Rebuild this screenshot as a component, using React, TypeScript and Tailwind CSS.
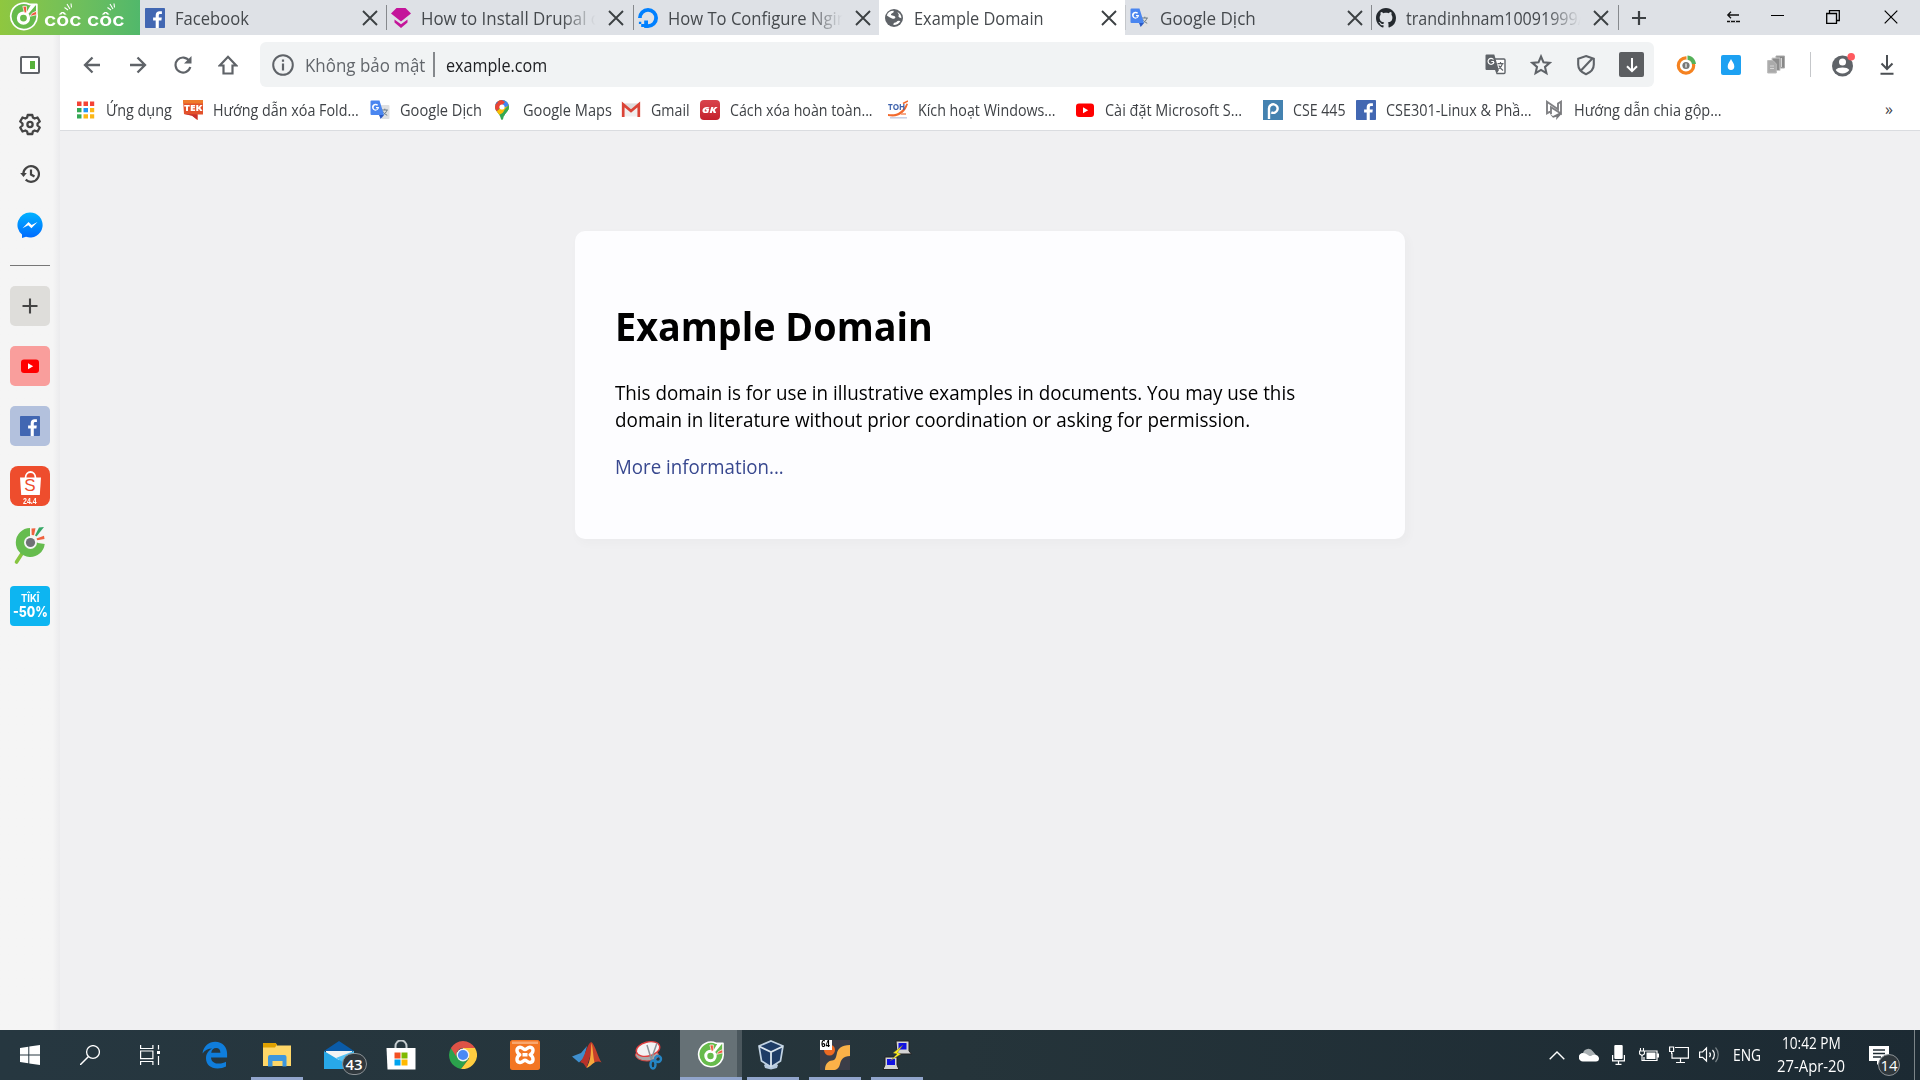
import React, { useLayoutEffect, useRef, useState } from "react";

type FitProps = { w: number; className?: string; children: React.ReactNode };

/* A line of text condensed or stretched to a given width. */
function Fit({ w, className = "", children }: FitProps) {
  const ref = useRef<HTMLSpanElement>(null);
  const [scale, setScale] = useState(1);
  useLayoutEffect(() => {
    if (ref.current) setScale(w / ref.current.offsetWidth);
  }, [w]);
  return (
    <span className={`block shrink-0 whitespace-nowrap ${className}`} style={{ width: w }}>
      <span ref={ref} className="inline-block origin-left" style={{ transform: `scaleX(${scale})` }}>
        {children}
      </span>
    </span>
  );
}

type IconProps = { className?: string };

const FacebookIcon = ({ className = "size-5" }: IconProps) => (
  <svg viewBox="0 0 20 20" className={className}>
    <rect width="20" height="20" rx="0.8" fill="#4267b2" />
    <path d="M13.8 20v-7.6h2.6l.4-3h-3V7.5c0-.9.3-1.5 1.5-1.5h1.6V3.3c-.3 0-1.200-.1-2.300-.1-2.300 0-3.900 1.400-3.900 4v2.200H8.100v3h2.600V20z" fill="#fff" />
  </svg>
);

const DrupalGuideIcon = () => (
  <svg viewBox="0 0 20 20" className="size-5">
    <path d="M5.500 0h9L20 5.500 10 13.500 0 5.500z" fill="#c4159a" />
    <path d="M3.500 11.500 10 16.300l6.500-4.800v3L10 20l-6.500-5.500z" fill="#c4159a" />
  </svg>
);

const DigitalOceanIcon = () => (
  <svg viewBox="0 0 20 20" className="size-5">
    <path d="M10 18.100A8.100 8.100 0 1 0 1.900 10" fill="none" stroke="#0080ff" strokeWidth="3.800" />
    <path d="M6.200 16.100H10V20H6.200zM3.200 16.100h3v3h-3zM.9 13.700h2.400v2.400H.9zM6.200 12.400H10v3.700H6.200z" fill="#0080ff" />
  </svg>
);

const GlobeIcon = () => (
  <svg viewBox="0 0 20 20" className="size-5">
    <circle cx="10" cy="10" r="9" fill="#5f6368" />
    <path d="M9.500 2.800c1 1.400-.8 2.100-1.800 2.600-.9.500-1 1.300-.2 1.900 1 .7 2.600.2 3.500 1.300.8 1 .2 2-.9 2.100-1.500.1-3.400-.6-4.600-1.500L2.800 7.500C3.600 4.800 6 2.800 9.500 2.800zM13.500 4c2.500 1.300 4 3.500 3.900 6.200l-2-.7c-.9-.4-1.200-1.400-.7-2.200.6-1.200-1-1.800-1.200-3.300zM9.500 16.900c-.3-1.200.5-2 1.700-2.300 1.600-.4 1.900-1.700 3.200-1.900l2 .2c-1.300 2.500-3.800 4.100-6.900 4z" fill="#fff" />
  </svg>
);

const TranslateIcon = () => (
  <svg viewBox="0 0 20 20" className="size-5">
    <path d="M8 5h10.500a1 1 0 0 1 1 1v12a1 1 0 0 1-1 1H12z" fill="#dfe0e2" />
    <path d="M11.800 10h6M14.800 8.700V10M17 10c-.7 2.500-2.500 4-4 5M13 11.500c.8 1.600 2.300 2.800 4.200 3.800" stroke="#6b7b85" strokeWidth="1" fill="none" />
    <path d="M1.500.500h8L14 15H1.500a1 1 0 0 1-1-1V1.500a1 1 0 0 1 1-1z" fill="#4a86f0" />
    <path d="M9 15h5l-3.300 4z" fill="#2b59c3" />
    <path d="M9 7H6v1.300h1.600C7.300 9.200 6.600 9.600 5.800 9.600a2.200 2.200 0 1 1 1.400-3.900l.9-.9A3.500 3.500 0 1 0 9 7z" fill="#fff" />
  </svg>
);

const GithubIcon = () => (
  <svg viewBox="0 0 16 16" className="size-5">
    <path fill="#24292e" d="M8 0C3.580 0 0 3.580 0 8c0 3.540 2.290 6.530 5.470 7.590.4.070.550-.170.550-.380 0-.190-.010-.820-.010-1.490-2.010.370-2.530-.490-2.690-.940-.090-.230-.480-.940-.820-1.130-.280-.150-.680-.520-.010-.530.630-.010 1.080.580 1.230.820.720 1.210 1.870.870 2.330.660.070-.520.280-.870.510-1.070-1.780-.200-3.640-.890-3.640-3.950 0-.870.310-1.590.820-2.150-.080-.200-.360-1.020.080-2.120 0 0 .670-.210 2.200.820.640-.180 1.320-.270 2-.270s1.360.090 2 .270c1.530-1.040 2.200-.820 2.200-.820.440 1.100.160 1.920.080 2.120.510.560.820 1.270.820 2.150 0 3.070-1.870 3.750-3.650 3.950.290.250.540.730.540 1.480 0 1.070-.010 1.930-.010 2.200 0 .210.150.460.550.380A8.010 8.010 0 0 0 16 8c0-4.420-3.580-8-8-8z" />
  </svg>
);

const CloseIcon = () => (
  <svg viewBox="0 0 16 16" className="size-4 shrink-0">
    <path d="M1 1l14 14M15 1L1 15" stroke="#3c4043" strokeWidth="1.900" />
  </svg>
);

const AppsIcon = () => (
  <svg viewBox="0 0 20 20" className="size-5">
    <path d="M1 1.500h4.500V6H1zM7.500 1.500H12V6H7.500zM14 1.500h4.200V6H14z" fill="#f44336" />
    <path d="M1 8h4.500v4.300H1z" fill="#34a853" />
    <path d="M7.500 8H12v4.300H7.500z" fill="#2196f3" />
    <path d="M14 8h4.200v4.300H14zM7.500 14.300H12v4.200H7.500zM14 14.300h4.200v4.200H14z" fill="#fbb616" />
    <path d="M1 14.300h4.500v4.200H1z" fill="#34a853" />
  </svg>
);

const TekIcon = () => (
  <div className="relative h-5 w-5">
    <svg viewBox="0 0 20 20" className="size-5">
      <path d="M0 0h20v14.500h-5.500V20L9 15.500 1 14z" fill="#e2512b" />
      <path d="M0 0h20v3.500H0z" fill="#ef7a2c" />
      <path d="M1 14l13.500.5V20L9 15.700z" fill="#c9302c" />
    </svg>
    <Fit w={18} className="absolute left-px top-[2px] text-[9px] leading-[11px] font-extrabold text-white">TEK</Fit>
  </div>
);

const MapsIcon = () => (
  <svg viewBox="0 0 20 20" className="size-5">
    <clipPath id="mapPin">
      <path d="M9 0a7 7 0 0 1 7 7c0 4.500-5 6.500-5.800 11.500-.2 1.700-2.200 1.700-2.400 0C7 13.500 2 11.500 2 7a7 7 0 0 1 7-7z" />
    </clipPath>
    <g clipPath="url(#mapPin)">
      <path d="M0 0h20v20H0z" fill="#34a853" />
      <path d="M1 13L17 1v8L6 15z" fill="#fbbc04" />
      <path d="M8 0h10v5L10 8z" fill="#4285f4" />
      <path d="M0 0h9l3 2-8 9H0z" fill="#ea4335" />
      <path d="M0 7l5-5-5-2z" fill="#1a73e8" />
      <path d="M12 9l5-5v12H8z" fill="#34a853" />
    </g>
    <circle cx="9" cy="7" r="2.600" fill="#fff" />
  </svg>
);

const GmailIcon = () => (
  <svg viewBox="0 0 20 20" className="size-5">
    <path d="M2 3.500h16v13H2z" fill="#f0eeee" />
    <path d="M2 3.500h16L10 10z" fill="#dedbdb" />
    <path d="M2.200 17V4.500L10 11l7.800-6.500V17" stroke="#db4437" strokeWidth="2.700" fill="none" />
  </svg>
);

const GkIcon = () => (
  <div className="flex size-5 items-center justify-center rounded-[4px] bg-linear-to-b from-[#d9434c] to-[#c41f2b]">
    <Fit w={15} className="text-[8px] leading-[10px] font-extrabold italic text-white">GK</Fit>
  </div>
);

const TohIcon = () => (
  <div className="relative size-5">
    <svg viewBox="0 0 20 20" className="size-5">
      <path d="M0 14c8 1.500 14-1.500 18.500-10.500L20 4c-3 9-9 14-20 12z" fill="#f26a2e" />
      <path d="M2 17.800h17" stroke="#c9cfe4" strokeWidth="1.500" />
      <path d="M13 14h5" stroke="#f5936a" strokeWidth="1.600" />
      <path d="M15 3.500L20 1" stroke="#f26a2e" strokeWidth="1.500" />
    </svg>
    <Fit w={17} className="absolute left-0 top-[2px] text-[9px] leading-[10px] font-bold text-[#3f63ad]">TOH</Fit>
  </div>
);

const YoutubeIcon = () => (
  <svg viewBox="0 0 20 20" className="size-5">
    <rect x="1" y="3.500" width="18" height="13.500" rx="3" fill="#f00" />
    <path d="M8 7.200v6l5.200-3z" fill="#fff" />
  </svg>
);

const PIcon = () => (
  <div className="flex size-5 items-center justify-center bg-[#4482b0]">
    <svg viewBox="0 0 20 20" className="size-5">
      <path d="M6 19V8.500a4.300 4.300 0 1 1 2.300 3.900" fill="none" stroke="#fff" strokeWidth="2.400" />
    </svg>
  </div>
);

const NIcon = () => (
  <svg viewBox="0 0 20 20" className="size-5">
    <path d="M7.500 10.800L3 13.300V1.800l11 7.500V3.500l3-1.800v11.800L7 7.300v7" fill="none" stroke="#808184" strokeWidth="1.900" />
    <path d="M6 14.300l3 1.700 8-4v2.500L12 20l.5-3.200-3.500 1z" fill="#77787b" />
  </svg>
);

/* Round badge with a "C" shaped eye and the chick's crest. */
const CocMark = ({ className = "size-7" }: IconProps) => (
  <svg viewBox="0 0 28 28" className={className}>
    <path d="M19 2.200A12.300 12.300 0 1 0 26 11V2.300z" fill="#67bb4c" stroke="#fff" strokeWidth="1.600" strokeLinejoin="round" />
    <circle cx="13.500" cy="15" r="4.700" fill="none" stroke="#fff" strokeWidth="3" />
    <path d="M12.900 4l3.400 0 .1 6-2 .2zM21.500 10.500l4-1.900.3 3.200-6.300 1.600z" fill="#f2563c" stroke="#fff" strokeWidth=".7" />
    <path d="M20.500 2.500l5-.2-7.500 9-1.800-1.500z" fill="#fff" />
  </svg>
);

const tabs = [
  { icon: <FacebookIcon />, title: "Facebook", w: 74 },
  { icon: <DrupalGuideIcon />, title: "How to Install Drupal on", w: 190, fade: true },
  { icon: <DigitalOceanIcon />, title: "How To Configure Nginx", w: 188, fade: true },
  { icon: <GlobeIcon />, title: "Example Domain", w: 130, active: true },
  { icon: <TranslateIcon />, title: "Google Dịch", w: 95.500 },
  { icon: <GithubIcon />, title: "trandinhnam10091999/", w: 178, fade: true },
];

function TabStrip() {
  return (
    <div className="flex h-[35px] bg-[#dee1e6]">
      <div className="flex w-[140px] shrink-0 items-center bg-linear-to-r from-[#8fc73f] to-[#51b86b] pl-[9px]">
        <CocMark className="mb-px h-[30px] w-[30px]" />
        <div className="relative ml-[5px] mt-[5px] flex">
          <Fit w={80} className="font-['Inter'] text-[18px] leading-[24px] font-semibold text-white">côc côc</Fit>
          <svg viewBox="0 0 82 10" className="absolute left-0 -top-[5px] h-[10px] w-[82px]">
            <path d="M23 1l3 5M20.500 4.500l3.500 2.500M27 .5l.5 4M66 1l3 5M63.500 4.500l3.500 2.500M70 .5l.5 4" stroke="#fff" strokeWidth="1.100" />
          </svg>
        </div>
      </div>
      {tabs.map((t, i) => (
        <div key={t.title} className={`flex w-[246.3px] shrink-0 items-center ${t.active ? "bg-white" : ""}`}>
          <div className={`-mr-px h-[25px] w-px ${i === 0 || t.active ? "" : i === 4 ? "bg-[#c4c7cb]" : "bg-[#86898d]"}`} />
          <div className="ml-[5px] shrink-0">{t.icon}</div>
          <div className={`ml-[10px] w-[180px] overflow-hidden ${t.fade ? "[mask-image:linear-gradient(to_right,black_78%,transparent_97%)]" : ""}`}>
            <Fit w={t.w} className="text-[17.5px] leading-[26px] text-[#45494d]">{t.title}</Fit>
          </div>
          <div className="ml-[7px]"><CloseIcon /></div>
        </div>
      ))}
      <div className="flex items-center">
        <div className="h-[25px] w-px bg-[#86898d]" />
        <svg viewBox="0 0 16 16" className="ml-[12px] size-4"><path d="M8 1v14M1 8h14" stroke="#3c4043" strokeWidth="2.200" /></svg>
      </div>
      <div className="ml-auto flex items-center pb-[2px] text-black">
        <svg viewBox="0 0 14 12" className="mr-[31px] h-3 w-[14px]"><path d="M13 4H2M5 .8L1.800 4 5 7.200M1 10.500h13" fill="none" stroke="#111" strokeWidth="1.300" /><path d="M4.500 9.500v2M9.500 9.500v2" stroke="#dee1e6" /></svg>
        <div className="mr-[42px] mb-[2px] h-px w-[13px] bg-black" />
        <svg viewBox="0 0 14 14" className="mr-[44px] size-[14px]"><path d="M.7 3.500h9.800v9.800H.7zM3.500 3.500V.7h9.800v9.800h-2.800" fill="none" stroke="#000" strokeWidth="1.300" /></svg>
        <svg viewBox="0 0 14 14" className="mr-[22px] size-[14px]"><path d="M.7.7l12.600 12.600M13.300.7L.7 13.300" stroke="#000" strokeWidth="1.200" /></svg>
      </div>
    </div>
  );
}

function Toolbar() {
  return (
    <div className="flex h-[59px] items-center">
      <div className="flex w-[200px] shrink-0 items-center pl-[23px]">
        <svg viewBox="0 0 18 18" className="size-[18px]"><path d="M17 9H2.500M9.500 1.500L2 9l7.500 7.500" fill="none" stroke="#5f6368" strokeWidth="2.300" /></svg>
        <svg viewBox="0 0 18 18" className="ml-[28px] size-[18px]"><path d="M1 9h14.500M8.500 1.500L16 9l-7.500 7.500" fill="none" stroke="#5f6368" strokeWidth="2.300" /></svg>
        <svg viewBox="0 0 18 18" className="ml-[27px] size-[18px]"><path d="M15.400 5A7.500 7.500 0 1 0 16.300 11" fill="none" stroke="#5f6368" strokeWidth="2.200" /><path d="M17.500 0v7.500H10z" fill="#5f6368" /></svg>
        <svg viewBox="0 0 20 20" className="ml-[26px] size-5"><path d="M5.500 18.500V10.500H1.800L10 1.800l8.200 8.700h-3.700v8z" fill="none" stroke="#5f6368" strokeWidth="2.200" /></svg>
      </div>
      <div className="flex h-[45px] w-[1394px] shrink-0 items-center rounded-[6px] bg-[#f1f3f4] pl-[12px] pr-[10px]">
        <svg viewBox="0 0 22 22" className="size-[22px]"><circle cx="11" cy="11" r="9.800" fill="none" stroke="#5f6368" strokeWidth="2" /><path d="M11 9.500v7M11 5.500v2.200" stroke="#5f6368" strokeWidth="2.200" /></svg>
        <Fit w={120} className="ml-[11px] text-[17.5px] leading-[26px] text-[#62666b]">Không bảo mật</Fit>
        <div className="ml-[8px] h-[25px] w-[1.500px] bg-[#85888c]" />
        <Fit w={101.500} className="ml-[11px] text-[17.5px] leading-[26px] text-[#202124]">example.com</Fit>
        <div className="ml-auto flex items-center">
          <svg viewBox="0 0 21 21" className="size-[21px]">
            <path d="M8 5h11a1 1 0 0 1 1 1v12.500a1 1 0 0 1-1 1h-7.500" fill="#fff" stroke="#5f6368" strokeWidth="1.400" />
            <path d="M1.500.500h7.800l4.500 15.500H1.500a1 1 0 0 1-1-1V1.500a1 1 0 0 1 1-1zM10 16h4l-2.500 4z" fill="#5f6368" />
            <path d="M9 7.500H6.300M8.500 5.500a3 3 0 1 0 .5 2.500" fill="none" stroke="#fff" strokeWidth="1.200" />
            <path d="M12.500 9.700h6M15.500 8v1.700M17.500 9.700c-.7 2.800-2 4-4 5.300M13.800 11.500c1 2 2.300 3.500 4.300 5" fill="none" stroke="#5f6368" strokeWidth="1.200" />
          </svg>
          <svg viewBox="0 0 22 22" className="ml-[24px] size-[22px]"><path d="M11 2.500l2.500 5.800 6.200.6-4.700 4.100 1.400 6.100-5.400-3.200-5.400 3.200L7 13 2.300 8.900l6.200-.6z" fill="none" stroke="#5f6368" strokeWidth="2.100" /></svg>
          <svg viewBox="0 0 20 22" className="ml-[24px] h-[22px] w-5"><path d="M10 2l7.800 2.800v5.700c0 4.600-3 7.800-7.800 9.700-4.800-1.900-7.800-5.100-7.800-9.700V4.800z" fill="none" stroke="#5f6368" strokeWidth="2.100" /><path d="M4.500 17L16.300 4.500" stroke="#5f6368" strokeWidth="2.100" /></svg>
          <div className="ml-[23px] flex size-[25px] items-center justify-center rounded-[2px] bg-[#5c5e61]">
            <svg viewBox="0 0 16 16" className="size-4"><path d="M8 1v13M3 9.200l5 5 5-5" fill="none" stroke="#fff" strokeWidth="2" /></svg>
          </div>
        </div>
      </div>
      <div className="flex items-center pl-[22px]">
        <svg viewBox="0 0 20 20" className="size-5"><circle cx="10" cy="10.500" r="7.700" fill="none" stroke="#f58220" strokeWidth="3.200" /><path d="M10.500 9V0c5.500 0 9.200 3.500 9.500 9h-4.500c-.3-2.500-2-4-5-4.300z" fill="#fff" /><path d="M11.500.5c4.500.2 8 3.700 8.500 8.500h-4c-.5-2.400-2.100-4-4.500-4.300z" fill="#55b159" /><circle cx="10" cy="10.500" r="3.600" fill="#777" /><path d="M10 8.500v4" stroke="#eee" strokeWidth="1.300" /></svg>
        <div className="ml-[25px] flex size-5 items-center justify-center rounded-[2px] bg-[#1da1f2]">
          <svg viewBox="0 0 10 12" className="h-3 w-2.5"><path d="M5 0c1 2.500 3.300 4.500 3.300 7.300a3.300 3.800 0 0 1-6.600 0C1.700 4.500 4 2.500 5 0z" fill="#fff" /></svg>
        </div>
        <svg viewBox="0 0 20 20" className="ml-[26px] size-5"><path d="M9 1h8.500v12H9z" fill="#888" stroke="#aaa" /><path d="M5 3h8v12.500H5z" fill="#8c8c8c" stroke="#ccc" /><path d="M.7 5.500H6L9.300 9v9H.7z" fill="#aaa" stroke="#bbb" /><path d="M3 11h4M3 13.500h4M14.500 3v9" stroke="#d5d5d5" /></svg>
        <div className="ml-[23px] h-[25px] w-px bg-[#c5c7ca]" />
        <svg viewBox="0 0 24 24" className="ml-[20px] size-6"><circle cx="11.500" cy="13" r="10.500" fill="#5f6368" /><circle cx="11.500" cy="9" r="3.500" fill="#fff" /><path d="M4.700 17c1.500-3.300 12.100-3.300 13.600 0-3 4.500-10.600 4.500-13.600 0z" fill="#fff" /><circle cx="20.200" cy="3.800" r="3.800" fill="#ff5a5f" /></svg>
        <svg viewBox="0 0 14 20" className="ml-[25px] h-5 w-[14px]"><path d="M7 0v13.500M1.500 8.500L7 14l5.500-5.500M.5 18.700h13" fill="none" stroke="#4b4f53" strokeWidth="2" /></svg>
      </div>
    </div>
  );
}

const bookmarks = [
  { icon: <AppsIcon />, label: "Ứng dụng", w: 66, cell: "w-[107px]" },
  { icon: <TekIcon />, label: "Hướng dẫn xóa Fold...", w: 146, cell: "w-[187px]" },
  { icon: <TranslateIcon />, label: "Google Dịch", w: 82, cell: "w-[123px]" },
  { icon: <MapsIcon />, label: "Google Maps", w: 88.500, cell: "w-[128px]" },
  { icon: <GmailIcon />, label: "Gmail", w: 38.500, cell: "w-[79px]" },
  { icon: <GkIcon />, label: "Cách xóa hoàn toàn...", w: 143, cell: "w-[188px]" },
  { icon: <TohIcon />, label: "Kích hoạt Windows...", w: 138, cell: "w-[187px]" },
  { icon: <YoutubeIcon />, label: "Cài đặt Microsoft S...", w: 137, cell: "w-[188px]" },
  { icon: <PIcon />, label: "CSE 445", w: 53, cell: "w-[93px]" },
  { icon: <FacebookIcon />, label: "CSE301-Linux & Phầ...", w: 146, cell: "w-[188px]" },
  { icon: <NIcon />, label: "Hướng dẫn chia gộp...", w: 148, cell: "w-[190px]" },
];

function BookmarkBar() {
  return (
    <div className="flex h-[37px] items-center border-b border-[#dadce0] pb-[4px] pl-[15.5px]">
      {bookmarks.map((b) => (
        <div key={b.label} className={`flex shrink-0 items-center gap-[10px] ${b.cell}`}>
          <div className="shrink-0">{b.icon}</div>
          <Fit w={b.w} className="mb-px text-[15.5px] leading-[22px] text-[#3f4246]">{b.label}</Fit>
        </div>
      ))}
      <span className="ml-auto mr-[27px] mb-[3px] text-[16px] leading-[18px] text-[#3f4246]">»</span>
    </div>
  );
}

function Sidebar() {
  return (
    <aside className="flex w-[60px] shrink-0 flex-col items-center bg-linear-to-r from-[#f5f5f5] from-88% to-[#ebebed]">
      <svg viewBox="0 0 20 18" className="mt-[21px] h-[18px] w-5"><rect x="1" y="1" width="18" height="16" rx="1" fill="#fff" stroke="#5f6368" strokeWidth="2" /><path d="M10 5h5v8h-5z" fill="#58b13c" /></svg>
      <svg viewBox="0 0 24 24" className="mt-[38px] size-6" fill="none" stroke="#444" strokeWidth="2.300" strokeLinejoin="round"><path d="M9.700 3h4.600l.6 2.500 1.700 1 2.900-1 2.300 4-2.300 2v2l2.300 2-2.300 4-2.900-1-1.700 1-.6 2.500H9.700l-.6-2.500-1.700-1-2.900 1-2.300-4 2.300-2v-2l-2.300-2 2.300-4 2.900 1 1.700-1z" /><circle cx="12" cy="12.500" r="2.600" /></svg>
      <svg viewBox="0 0 20 18" className="mt-[29px] h-[18px] w-5" fill="none" stroke="#444" strokeWidth="2.200"><path d="M3.300 9a7.800 7.800 0 1 1 2.400 5.600M11 4.500V9.500l3.500 2" /><path d="M.2 8h6.600L3.500 12z" fill="#444" stroke="none" /></svg>
      <svg viewBox="0 0 26 26" className="mt-[29px] size-[26px]"><defs><linearGradient id="msg" x1="0" y1="0" x2="0" y2="1"><stop stopColor="#00b2ff" /><stop offset="1" stopColor="#006aff" /></linearGradient></defs><path d="M13 .5A12.500 12.500 0 1 1 9 24.800L5 26v-3.500A12.400 12.400 0 0 1 13 .5z" fill="url(#msg)" /><path d="M5.500 16.200l6-6.300 3.200 3 5.800-3-6.100 6.400-3.100-3z" fill="#fff" /></svg>
      <div className="mt-[27px] h-px w-10 bg-[#777]" />
      <div className="mt-[20px] flex flex-col gap-5">
        <div className="flex size-10 items-center justify-center rounded-[5px] bg-[#deddda]">
          <svg viewBox="0 0 16 16" className="size-4"><path d="M8 .5v15M.5 8h15" stroke="#444" strokeWidth="2.100" /></svg>
        </div>
        <div className="flex size-10 items-center justify-center rounded-[5px] bg-[#f99e9c]"><YoutubeIcon /></div>
        <div className="flex size-10 items-center justify-center rounded-[5px] bg-[#b3c1dd]"><FacebookIcon /></div>
        <div className="relative size-10 rounded-[8px] bg-[#ee4d2d]">
          <svg viewBox="0 0 40 40" className="size-10"><path d="M10 11.500h21l-1.200 17.500H11.200z" fill="#fff" /><path d="M15.500 12c0-8 10-8 10 0" fill="none" stroke="#fff" strokeWidth="1.800" /></svg>
          <span className="absolute inset-x-0 top-[11px] text-center font-['Liberation_Sans'] text-[17px] leading-[17px] text-[#ee4d2d]">S</span>
          <Fit w={14} className="absolute left-[13px] top-[30px] font-['Liberation_Sans'] text-[9.5px] leading-[9px] font-bold text-white">24.4</Fit>
        </div>
        <svg viewBox="0 0 40 40" className="size-10">
          <path d="M6.500 36L13 26" stroke="#87c540" strokeWidth="3.600" strokeLinecap="round" />
          <path d="M20 2A14.500 14.500 0 1 0 34.700 18L28 17 20 12z" fill="#66bc4e" />
          <circle cx="20.500" cy="16.500" r="6.500" fill="#f5f5f5" /><circle cx="20.500" cy="16.500" r="4.600" fill="#707276" />
          <path d="M20.500 1h15v15h-8l-4-4.500h-3z" fill="#f5f5f5" />
          <path d="M21.500 2.500l4-.2-1.500 7-2.300-.3zM26.500 12.500l7.500-2.800.5 3.300-7.200 1.200z" fill="#f0623f" />
          <path d="M29 1.500l5-.5-7.500 9.500-1.500-1z" fill="#36a866" />
        </svg>
        <div className="flex size-10 flex-col items-center overflow-hidden rounded-[4px] bg-[#0db5f1] pt-[6px] text-white">
          <Fit w={18} className="h-[13px] font-['Inter'] text-[11px] leading-[13px] font-bold">TÎKÎ</Fit>
          <Fit w={35} className="h-[14px] font-['Inter'] text-[14px] leading-[14px] font-extrabold">-50%</Fit>
        </div>
      </div>
    </aside>
  );
}

const Badge = ({ children, className }: { children: React.ReactNode; className: string }) => (
  <span className={`absolute flex items-center justify-center rounded-full border border-[#8c9296] bg-[#30383d] text-white ${className}`}>{children}</span>
);

const taskApps: { name: string; open?: boolean; active?: boolean; icon: React.ReactNode }[] = [
  { name: "edge", icon: <svg viewBox="0 0 26 28" className="h-7 w-[26px]"><path d="M.5 12.500C1.500 5 7 .8 13.200.8c7.300 0 11.900 5 11.900 12v3.600H9c.2 4.700 4.200 6.200 8 6.200 2.700 0 5-.7 7-1.800v4.800c-2.300 1.300-5.200 2-8.500 2C8.500 27.600 4 23.300 4 17.300c0-4.500 2.500-8 6.200-9.800C6 7.500 3 9.300.5 12.500zM9.200 11.700h9.200c0-3-1.400-4.800-4.300-4.800-2.600 0-4.500 1.900-4.900 4.800z" fill="#0f7ddb" /></svg> },
  { name: "files", open: true, icon: <svg viewBox="0 0 28 24" className="h-6 w-7"><path d="M0 0h12.500l1.500 2.500H28V23H0z" fill="#ffd768" /><path d="M0 0h12.500l1.500 1.500-2 3H0z" fill="#e0a100" /><path d="M5 23.500V14a2 2 0 0 1 2-2h14.500a2 2 0 0 1 2 2v9.500h-4V18H9.500v5.500z" fill="#3e97dd" /></svg> },
  { name: "mail", icon: <div className="relative"><svg viewBox="0 0 30 28" className="h-7 w-[30px]"><path d="M0 10L15 0l15 10z" fill="#0a5ba8" /><path d="M2 10h26v9H2z" fill="#f3f3f3" /><path d="M0 10l15 9 15-9v18H0z" fill="#28a8e8" /><path d="M30 10v18L12 17z" fill="#52c2f5" /></svg><Badge className="left-[18px] top-[12px] h-[22px] w-[25px] text-[15px] leading-none font-semibold">43</Badge></div> },
  { name: "store", icon: <svg viewBox="0 0 30 30" className="size-[30px]"><path d="M9.500 8V6a5.500 5.500 0 0 1 11 0v2" fill="none" stroke="#c5cccf" strokeWidth="2" /><path d="M.5 8h29v21.500h-28z" fill="#fff" /><path d="M8.500 12.500h6v6h-6z" fill="#f25022" /><path d="M15.500 12.500h6v6h-6z" fill="#7fba00" /><path d="M8.500 19.500h6v6h-6z" fill="#00a4ef" /><path d="M15.500 19.500h6v6h-6z" fill="#ffb900" /></svg> },
  { name: "chrome", icon: <svg viewBox="0 0 28 28" className="size-7"><path d="M14 14L2 7A13.900 13.900 0 0 0 12 27.900L20 17z" fill="#2ba24c" /><path d="M14 14l6 3.500-8 10.400A14 14 0 0 0 26 7H14z" fill="#ffcd40" /><path d="M1.900 7a14 14 0 0 1 24.200 0H14a7 7 0 0 0-6.500 9z" fill="#de5246" /><circle cx="14" cy="14" r="6.400" fill="#f1f1f1" /><circle cx="14" cy="14" r="5.100" fill="#4a8af4" /></svg> },
  { name: "xampp", icon: <svg viewBox="0 0 30 30" className="size-[30px]"><rect width="30" height="30" rx="2.500" fill="#f37623" /><path d="M2 1.500h26v2.500H2z" fill="#f9a76e" /><path d="M9.800 14.800C6.500 13 5.500 7.500 10 7.300c2.500-.1 3.500 2.200 5 2.200s2.500-2.300 5-2.200c4.500.2 3.500 5.700.2 7.500 3.300 1.800 4.300 7.400-.2 7.700-2.500.1-3.500-2.200-5-2.200s-2.500 2.300-5 2.200c-4.500-.3-3.500-5.900-.2-7.700zM12.500 14.800h5" fill="none" stroke="#fff" strokeWidth="3.400" strokeLinejoin="round" /></svg> },
  { name: "matlab", icon: <svg viewBox="0 0 30 28" className="h-7 w-[30px]"><path d="M0 15.500l9-3.500 6-7-3 12-5 4.500z" fill="#3f8fce" /><path d="M8 21c5-4 7-19 11.500-20L20 9l-5.500 18-3-4.500z" fill="#b8322a" /><path d="M19.500 1C23 4 26 16 29.500 21.500c-5-3-9.500 1.500-15 5.500C20 20 17 8 19.500 1z" fill="#c8402a" /><path d="M19.500 2c-1 9 .5 15-5 25 3-1 5.500-4 8-5.500C21 15 21 7 19.500 2z" fill="#f7a83c" /></svg> },
  { name: "snip", icon: <svg viewBox="0 0 30 30" className="size-[30px]"><ellipse cx="13" cy="15" rx="11.500" ry="6" fill="#a8a8a8" stroke="#d8453f" /><ellipse cx="14" cy="9" rx="12" ry="7" transform="rotate(-14 14 9)" fill="#f3f3f3" stroke="#e03c3c" strokeWidth="1.400" /><path d="M13 5l4.500 15M23 3l-6 17" stroke="#8b9298" strokeWidth="1.500" /><circle cx="24" cy="19" r="3" fill="none" stroke="#2585c4" strokeWidth="2.400" /><ellipse cx="19" cy="24.500" rx="2.500" ry="4" fill="none" stroke="#2585c4" strokeWidth="2.400" /></svg> },
  { name: "coccoc", active: true, icon: <CocMark className="size-7" /> },
  { name: "virtualbox", open: true, icon: <svg viewBox="0 0 28 30" className="mr-[4px] h-[30px] w-7"><path d="M7 25l7-5 7 5-1 3-6 1.500L8 28z" fill="#b5c8dc" /><path d="M14 1l12 5-2.500 15L14 27l-9.500-6L2 6z" fill="#1e3c66" stroke="#c1d2e2" strokeWidth="1.700" /><path d="M2.500 6.500L14 12l11.500-5.500M14 12v14.500" fill="none" stroke="#dbe6ef" strokeWidth="1.800" /></svg> },
  { name: "vm64", open: true, icon: <div className="relative size-[30px] bg-[#3b3d48]"><svg viewBox="0 0 30 30" className="size-[30px]"><circle cx="9.500" cy="10" r="5.500" fill="#ef6a22" /><path d="M30 5v11c-7 0-9 4-10 8-1 4-3 6-7 6H5c0-6 3-9 7-9.500 4-.5 4-3.500 5-7.500S21 5 30 5z" fill="#fcb148" /><path d="M0 0h12v10H0z" fill="#fff" /></svg><Fit w={9} className="absolute left-[1.5px] top-0 font-['DejaVu_Sans'] text-[8px] leading-[10px] font-bold text-black">64</Fit></div> },
  { name: "putty", open: true, icon: <svg viewBox="0 0 30 30" className="size-[30px]"><path d="M14 1h13v10l2.500 3H15zM3 17h12v8l2 4.500H1L3 25z" fill="#d4d4d4" stroke="#222" /><path d="M16.500 3h8v6.500h-8zM5 19h8v6H5z" fill="#1212e0" /><path d="M21 5L11 13l4 1-7 7 11-7-3.500-1.500z" fill="#ffef1a" stroke="#555" strokeWidth=".4" /></svg> },
];

function Taskbar() {
  return (
    <footer className="flex h-[50px] bg-linear-to-r from-[#263740] via-[#25343a] to-[#1c2a33] text-white">
      <div className="flex w-[183.5px]">
        <div className="flex w-[60px] items-center justify-center"><svg viewBox="0 0 20 20" className="size-5"><path d="M0 3l8.300-1.300v7.800H0zM9.300 1.500L20 0v9.500H9.300zM0 10.500h8.300v7.800L0 17zM9.300 10.500H20V20L9.300 18.500z" fill="#fff" /></svg></div>
        <div className="flex w-[60px] items-center justify-center"><svg viewBox="0 0 20 20" className="size-5"><circle cx="13" cy="7" r="6.400" fill="none" stroke="#fff" strokeWidth="1.300" /><path d="M8.500 11.500L0 20" stroke="#fff" strokeWidth="1.500" /></svg></div>
        <div className="flex w-[60px] items-center justify-center"><svg viewBox="0 0 20 20" className="size-5" fill="none" stroke="#fff" strokeWidth="1.200"><path d="M.6 0v3.500h12.300V0M.6 20v-3.500h12.300V20M.6 6h12.300v7.700H.6zM18.500 0v4.500M18.500 11v9" /><path d="M17 6h3v3h-3z" fill="#fff" stroke="none" /></svg></div>
      </div>
      {taskApps.map((a) => (
        <div key={a.name} className={`relative flex w-[62px] shrink-0 items-center justify-center ${a.active ? "bg-linear-to-r from-[#667176] from-92% to-[#4b575d] to-92%" : ""}`}>
          {a.icon}
          {(a.open || a.active) && <div className={`absolute bottom-0 h-[3px] bg-[#91a5cc] ${a.active ? "inset-x-0" : "inset-x-[5px]"}`} />}
        </div>
      ))}
      <div className="ml-auto flex items-center">
        <svg viewBox="0 0 16 9" className="mr-[14px] h-[9px] w-4"><path d="M.7 8.300L8 1l7.300 7.300" fill="none" stroke="#fff" strokeWidth="1.400" /></svg>
        <svg viewBox="0 0 20 14" className="mr-[13px] h-[14px] w-5"><path d="M4 5a5.500 5.500 0 0 1 10-1.500L17 7l-8 3z" fill="#a9b0b3" /><path d="M4 13.500a4 4 0 0 1 0-8.500c4 0 5 3.500 8 3 3-2.500 8-1 8 2.500a3 3 0 0 1-3 3z" fill="#fff" /></svg>
        <svg viewBox="0 0 13 20" className="mr-[14px] h-5 w-[13px]"><rect x="2.300" width="8.400" height="14" rx="1" fill="#fff" /><path d="M.6 10v5.800h11.800V10M6.500 16v3M3.500 19.400h6" fill="none" stroke="#fff" strokeWidth="1.200" /></svg>
        <svg viewBox="0 0 20 14" className="mr-[10px] h-[14px] w-5"><path d="M6 3h12v9.500H5V9" fill="none" stroke="#fff" strokeWidth="1.200" /><path d="M7.500 4.500h9v6.500h-9zM18 5.500h2v4h-2z" fill="#fff" /><path d="M1.500 0v2.500M4.500 0v2.500M.6 3h4.800v3L3 7.500.6 6zM3 7v5.500h3" fill="none" stroke="#fff" strokeWidth="1.100" /></svg>
        <svg viewBox="0 0 20 18" className="mr-[10px] h-[18px] w-5" fill="none" stroke="#fff" strokeWidth="1.200"><path d="M6 1.500h13.400v10.700H3V7M11.500 12v4M7 16.500h9M.6 1h4v4.500h-4zM2.600 6v2" /></svg>
        <svg viewBox="0 0 21 18" className="mr-[13px] h-[18px] w-[21px]" fill="none" stroke="#fff" strokeWidth="1.200"><path d="M.6 6h3L7.500 2v13l-3.900-3.700h-3zM10.500 6.500a3.500 3.500 0 0 1 0 4.500M13.500 4a7 7 0 0 1 0 9.500" /><path d="M16.500 1.500a11 11 0 0 1 0 14.500" stroke="#798388" /></svg>
        <Fit w={28.500} className="text-[15.5px] leading-5">ENG</Fit>
        <div className="ml-[16px] flex w-[68px] flex-col items-center pb-px">
          <Fit w={59} className="text-[15.5px] leading-[23px]">10:42 PM</Fit>
          <Fit w={68} className="text-[15.5px] leading-[23px]">27-Apr-20</Fit>
        </div>
        <div className="relative ml-[24px] mr-[25px]">
          <svg viewBox="0 0 20 20" className="size-5"><path d="M0 1h20v15h-8l-4 4v-4H0z" fill="#fff" /><path d="M4 5h12M4 8.500h12M4 12h8" stroke="#202d34" strokeWidth="1.300" /></svg>
          <Badge className="left-[9px] top-[9px] size-[22px] text-[15px] leading-none">14</Badge>
        </div>
        <div className="mr-[5px] h-[50px] w-px bg-[#7b8488]" />
      </div>
    </footer>
  );
}

export default function App() {
  return (
    <div className="flex h-[1080px] w-[1920px] flex-col overflow-hidden bg-[#f0f0f2] font-['Open_Sans','Noto_Sans',sans-serif]">
      <TabStrip />
      <div className="flex min-h-0 flex-1">
        <Sidebar />
        <div className="flex min-w-0 flex-1 flex-col">
          <div className="bg-white">
            <Toolbar />
            <BookmarkBar />
          </div>
          <main className="flex flex-1 justify-center pt-[100px]">
            <section className="h-[308px] w-[830px] rounded-[10px] bg-[#fdfdff] px-10 pt-[65px] text-black shadow-[3px_4px_9px_2px_rgba(0,0,0,0.02)]">
              <Fit w={318} className="text-[40px] leading-[60px] font-bold">Example Domain</Fit>
              <div className="mt-[23px] text-[20px] leading-[27px]">
                <Fit w={680}>This domain is for use in illustrative examples in documents. You may use this</Fit>
                <Fit w={635}>domain in literature without prior coordination or asking for permission.</Fit>
              </div>
              <Fit w={169} className="mt-5 text-[20px] leading-[27px] text-[#38488f]">More information...</Fit>
            </section>
          </main>
        </div>
      </div>
      <Taskbar />
    </div>
  );
}
